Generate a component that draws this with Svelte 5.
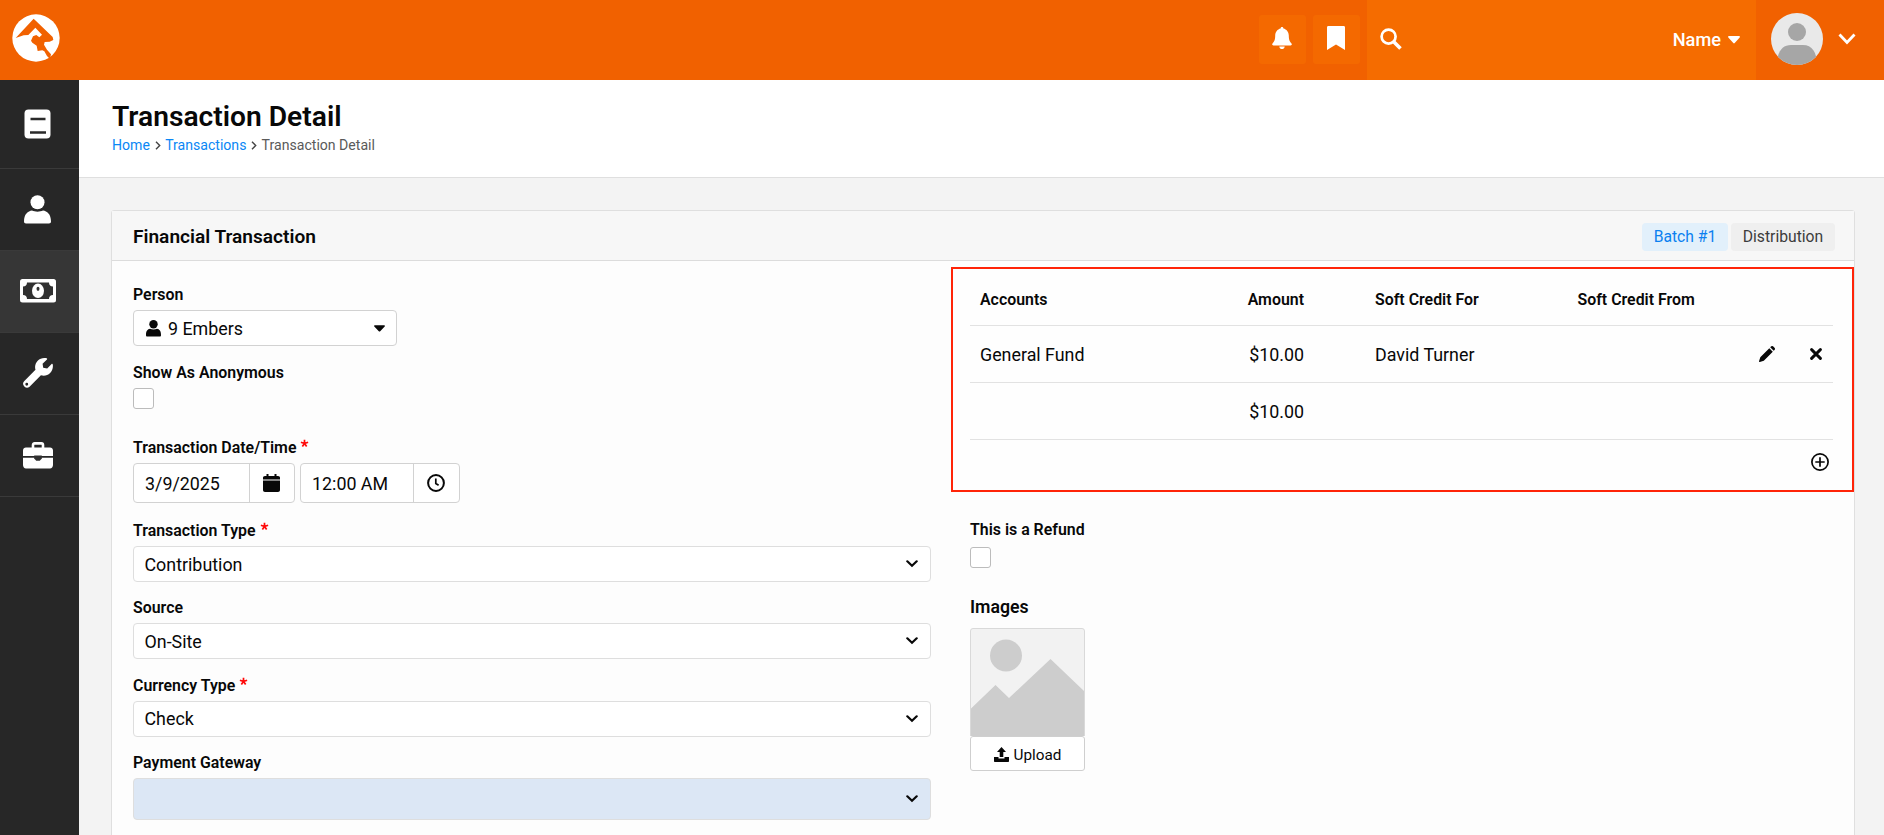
<script>
  const navItems = ["page", "person", "money", "wrench", "briefcase"];
  const activeItem = "money";

  const selects = [
    { label: "Transaction Type", value: "Contribution", required: true },
    { label: "Source", value: "On-Site" },
    { label: "Currency Type", value: "Check", required: true },
    { label: "Payment Gateway", value: "", highlighted: true },
  ];

  const accounts = [
    { name: "General Fund", amount: "$10.00", creditFor: "David Turner", creditFrom: "" },
  ];
  const total = "$10.00";
</script>

{#snippet required()}
  <svg class="required" viewBox="0 0 10 10"><path d="M5 .8V5M5 5 1 3.6M5 5l4-1.4M5 5 2.6 8.4M5 5l2.4 3.4" /></svg>
{/snippet}

{#snippet label(text, isRequired)}
  <div class="label">
    <span>{text}</span>
    {#if isRequired}{@render required()}{/if}
  </div>
{/snippet}

{#snippet navIcon(name)}
  {#if name === "page"}
    <svg width="27" height="30" viewBox="0 0 27 30">
      <rect x=".5" y=".5" width="26" height="29" rx="4" fill="#fff" />
      <path d="M6.500 10h15M6 23.500h16" stroke="#2a2a2a" stroke-width="2.500" />
    </svg>
  {:else if name === "person"}
    <svg width="27" height="29" viewBox="0 0 27 29" fill="#fff">
      <circle cx="13.500" cy="7.300" r="7" />
      <path d="M0 26.500C0 19 4 16 8 15.500c3 1.500 8 1.500 11 0 4 .5 8 3.500 8 11 0 1.300-.7 1.900-2 1.900H2c-1.300 0-2-.6-2-1.900z" />
    </svg>
  {:else if name === "money"}
    <svg width="36" height="24" viewBox="0 0 36 24">
      <rect width="36" height="23.500" rx="2.500" fill="#fff" />
      <path d="M7 3.500h22c0 2.500 1.500 4 4 4v8.500c-2.500 0-4 1.500-4 4H7c0-2.500-1.500-4-4-4V7.500c2.500 0 4-1.500 4-4z" fill="#303030" />
      <ellipse cx="18" cy="11.800" rx="6" ry="7.200" fill="#fff" />
      <ellipse cx="18" cy="9.800" rx="1.500" ry="2.100" fill="#303030" />
    </svg>
  {:else if name === "wrench"}
    <svg width="30" height="30" viewBox="0 0 512 512" fill="#fff">
      <path fill-rule="evenodd" d="M508 109c-2-9-14-12-20-5l-75 74-68-11-11-68 75-74c6-6 4-18-5-20-56-14-114 2-153 41-42 42-54 102-38 156L19 396a66 66 0 0 0 93 93l194-194c54 16 115 4 157-38 39-39 54-96 45-148zM64 472a24 24 0 1 1 0-48 24 24 0 0 1 0 48z" />
    </svg>
  {:else}
    <svg width="30" height="27" viewBox="0 0 30 27">
      <path d="M10 6V3c0-1 .8-1.600 1.600-1.600h6.800C19.200 1.400 20 2 20 3v3" fill="none" stroke="#fff" stroke-width="2.600" />
      <path d="M3 5.500h24c1.700 0 3 1.300 3 3V14H0V8.500c0-1.700 1.300-3 3-3zM0 15.800h30V23c0 1.700-1.300 3.500-3 3.500H3c-1.700 0-3-1.800-3-3.500z" fill="#fff" />
      <path d="M11.200 13.500h7.600v3l-2 2.300h-3.600l-2-2.300z" fill="#303030" />
    </svg>
  {/if}
{/snippet}

<header class="topbar">
  <svg class="logo" width="48" height="48" viewBox="0 0 144 144">
    <circle cx="72" cy="72" r="71" fill="#fff" />
    <path
      d="M11 72 65 14l57 55 2 9-11 5-15 1-2 8 9 15 12 14-3 14-9-9-8-14-6-3-14 2-3-16-13-9-4-6 6-13 10-4 9 7 8-8-20-21-21 22-14 1z"
      fill="#f16100"
    />
  </svg>

  <div class="quick">
    <button class="quick-btn" aria-label="Notifications">
      <svg width="20" height="22" viewBox="0 0 20 22" fill="#fff">
        <path d="M10 0c-.9 0-1.400.6-1.400 1.500C5.500 2.200 3.200 5 3.200 8.500c0 4.500-1 6-2.700 8-.7.800-.2 2 .9 2h17.200c1.100 0 1.600-1.200.9-2-1.700-2-2.700-3.500-2.700-8 0-3.500-2.300-6.300-5.400-7C11.400.6 10.900 0 10 0zM7.300 19.400h5.400c0 1.500-1.200 2.600-2.700 2.600s-2.700-1.100-2.700-2.600z" />
      </svg>
    </button>
    <button class="quick-btn" aria-label="Bookmarks">
      <svg width="18" height="24" viewBox="0 0 18 24" fill="#fff">
        <path d="M1.500 0h15c1 0 1.500.5 1.500 1.500V24l-9-5.500L0 24V1.500C0 .5.500 0 1.500 0z" />
      </svg>
    </button>
  </div>

  <div class="search">
    <svg width="22" height="22" viewBox="0 0 22 22" fill="none" stroke="#fff">
      <circle cx="8.600" cy="8.600" r="7" stroke-width="2.700" />
      <path d="m13.700 13.700 6.800 6.800" stroke-width="3.600" />
    </svg>
    <div class="search-type">
      <span>Name</span>
      <svg width="12" height="8" viewBox="0 0 12 8"><path d="M1 0h10c.9 0 1.200.9.700 1.500L6.700 7c-.4.500-1 .5-1.400 0L.3 1.500C-.2.9.1 0 1 0z" fill="#fff" /></svg>
    </div>
  </div>

  <div class="account">
    <svg width="52" height="52" viewBox="0 0 52 52">
      <clipPath id="avatar"><circle cx="26" cy="26" r="26" /></clipPath>
      <g clip-path="url(#avatar)">
        <rect width="52" height="52" fill="#e9e9e9" />
        <circle cx="26" cy="19" r="9" fill="#a6a6a6" />
        <path d="M6 52c0-13 5-20 14-20h12c9 0 14 7 14 20z" fill="#a6a6a6" />
      </g>
    </svg>
    <svg width="18" height="12" viewBox="0 0 18 12"><path d="m1.500 1.500 7.500 8 7.500-8" fill="none" stroke="#fff" stroke-width="2.800" /></svg>
  </div>
</header>

<div class="shell">
  <nav class="sidebar">
    {#each navItems as item}
      <div class="nav-item" class:active={item === activeItem}>
        {@render navIcon(item)}
      </div>
    {/each}
  </nav>

  <main>
    <div class="page-title">
      <h1>Transaction Detail</h1>
      <div class="breadcrumb">
        <span class="link">Home</span>
        <svg width="6" height="9" viewBox="0 0 6 9"><path d="m1 .8 3.700 3.700L1 8.200" /></svg>
        <span class="link">Transactions</span>
        <svg width="6" height="9" viewBox="0 0 6 9"><path d="m1 .8 3.700 3.700L1 8.200" /></svg>
        <span>Transaction Detail</span>
      </div>
    </div>

    <section class="panel">
      <div class="panel-heading">
        <h2>Financial Transaction</h2>
        <div class="tags">
          <span class="tag info">Batch #1</span>
          <span class="tag">Distribution</span>
        </div>
      </div>

      <div class="panel-body">
        <div class="left">
          <div class="field person-field">
            {@render label("Person")}
            <div class="control picker">
              <svg width="15" height="17" viewBox="0 0 15 17" fill="#080808">
                <circle cx="7.500" cy="4.200" r="4.200" />
                <path d="M0 15c0-4 1.500-5.700 4-6.200 2 1 5 1 7 0 2.500.5 4 2.200 4 6.200 0 1-.4 1.500-1.300 1.500H1.300C.4 16.500 0 16 0 15z" />
              </svg>
              <span class="person">9 Embers</span>
              <svg width="11" height="7" viewBox="0 0 11 7"><path d="M.8.300h9.400c.7 0 1 .7.500 1.200L6.200 6.200c-.4.400-1 .4-1.400 0L.3 1.500C-.2 1 .1.300.8.300z" fill="#080808" /></svg>
            </div>
          </div>

          <div class="field anonymous">
            {@render label("Show As Anonymous")}
            <div class="checkbox"></div>
          </div>

          <div class="field date-time">
            {@render label("Transaction Date/Time", true)}
            <div class="inputs">
              <div class="control addon date">
                <span>3/9/2025</span>
                <i>
                  <svg width="17" height="18" viewBox="0 0 17 18" fill="#080808">
                    <path d="M3.500 0h2v2h6V0h2v2H15c1.200 0 2 .7 2 1.800v1.700H0V3.800C0 2.700.8 2 2 2h1.500zM0 6.500h17V16c0 1.200-.8 2-2 2H2c-1.200 0-2-.8-2-2z" />
                  </svg>
                </i>
              </div>
              <div class="control addon time">
                <span>12:00 AM</span>
                <i>
                  <svg width="18" height="18" viewBox="0 0 18 18" fill="none" stroke="#080808">
                    <circle cx="9" cy="9" r="7.900" stroke-width="2" />
                    <path d="M8.800 4.500v5l2.800 1.700" stroke-width="1.700" />
                  </svg>
                </i>
              </div>
            </div>
          </div>

          {#each selects as item}
            <div class="field">
              {@render label(item.label, item.required)}
              <div class="control select" class:highlighted={item.highlighted}>
                <span>{item.value}</span>
                <svg width="12" height="8" viewBox="0 0 12 8"><path d="m1.300 1.300 4.700 4.500 4.700-4.500" fill="none" stroke="#080808" stroke-width="2.200" stroke-linecap="round" /></svg>
              </div>
            </div>
          {/each}
        </div>

        <div class="right">
          <div class="accounts">
            <div class="row head">
              <span>Accounts</span>
              <span class="amount">Amount</span>
              <span>Soft Credit For</span>
              <span>Soft Credit From</span>
            </div>
            {#each accounts as account}
              <div class="row">
                <span>{account.name}</span>
                <span class="amount">{account.amount}</span>
                <span>{account.creditFor}</span>
                <span>{account.creditFrom}</span>
                <div class="actions">
                  <svg width="16" height="16" viewBox="0 0 16 16" fill="#080808">
                    <path d="m10.300 2.200 3.500 3.500-9 9L.8 16c-.5.100-.9-.3-.8-.8l1.300-4zM11.200 1.300 12 .5c.7-.7 1.600-.7 2.300 0l1.200 1.200c.7.700.7 1.600 0 2.300l-.8.800z" />
                  </svg>
                  <svg width="12" height="12" viewBox="0 0 12 12"><path d="m1.600 1.600 8.800 8.800M10.400 1.600l-8.800 8.800" stroke="#080808" stroke-width="2.900" stroke-linecap="round" /></svg>
                </div>
              </div>
            {/each}
            <div class="row">
              <span></span>
              <span class="amount">{total}</span>
            </div>
            <div class="add">
              <svg width="18" height="18" viewBox="0 0 18 18" fill="none" stroke="#080808" stroke-width="1.700">
                <circle cx="9" cy="9" r="8.100" />
                <path d="M9 4.300v9.400M4.300 9h9.400" />
              </svg>
            </div>
          </div>

          <div class="refund">
            {@render label("This is a Refund")}
            <div class="checkbox"></div>
          </div>

          <div class="images">
            <h3>Images</h3>
            <svg width="115" height="108" viewBox="0 0 115 108">
              <path d="M.5 108V3Q.5.500 3 .5h109q2.500 0 2.500 2.500v105" fill="#f2f2f2" stroke="#d9d9d9" />
              <circle cx="36" cy="27.500" r="16" fill="#cdcdcd" />
              <path d="M1 80.500 25.500 57 39 70l41.500-39L114 63v45H1z" fill="#cdcdcd" />
            </svg>
            <button class="upload">
              <svg width="15" height="15" viewBox="0 0 15 15" fill="#080808">
                <path d="M7.500 0 12 5H9.300v5H5.700V5H3zM0 10h4.500v1.500h6V10H15v4c0 .6-.4 1-1 1H1c-.6 0-1-.4-1-1z" />
              </svg>
              <span>Upload</span>
            </button>
          </div>
        </div>
      </div>
    </section>
  </main>
</div>

<style>
  :global(body) {
    margin: 0;
    overflow: hidden;
    font-family: Roboto, "Liberation Sans", sans-serif;
    color: #080808;
  }

  * {
    box-sizing: border-box;
  }

  svg {
    display: block;
    flex: none;
  }

  span {
    white-space: nowrap;
  }

  h1,
  h2,
  h3 {
    margin: 0;
    font-weight: 600;
  }

  .topbar {
    display: flex;
    height: 80px;
    background: #f16100;
  }

  .logo {
    margin: 14px 0 0 12px;
  }

  .quick {
    display: flex;
    gap: 7px;
    margin-left: auto;
    padding: 15px 7px 0 0;
  }

  .quick-btn {
    display: flex;
    align-items: center;
    justify-content: center;
    width: 47px;
    height: 49px;
    padding: 0 1px 3px 0;
    border: 0;
    border-radius: 3px;
    background: #f46900;
  }

  .search {
    display: flex;
    align-items: center;
    justify-content: space-between;
    width: 389px;
    padding: 0 16px 3px 13px;
    background: #f56c00;
  }

  .search-type {
    display: flex;
    align-items: center;
    gap: 7px;
    padding-top: 2px;
    font-size: 18.200px;
    font-weight: 500;
    color: #fff;
  }

  .account {
    display: flex;
    align-items: center;
    gap: 15px;
    width: 128px;
    padding: 0 0 3px 15px;
  }

  .shell {
    display: flex;
    height: 755px;
  }

  .sidebar {
    width: 79px;
    flex: none;
    background: #272727;
  }

  .nav-item {
    display: flex;
    align-items: center;
    justify-content: center;
    height: 82px;
    padding: 0 4px 1px 0;
    border-bottom: 1px solid #3a3a3a;
  }

  .nav-item:first-child {
    height: 89px;
    padding-bottom: 0;
  }

  .nav-item.active {
    background: #363636;
  }

  main {
    flex: 1;
    background: #f3f3f3;
  }

  .page-title {
    height: 98px;
    padding: 20px 33px;
    border-bottom: 1px solid #dfdfdf;
    background: #fff;
  }

  h1 {
    font-size: 28.200px;
    line-height: 33px;
  }

  .breadcrumb {
    display: flex;
    align-items: center;
    height: 24px;
    font-size: 14.100px;
    color: #5a5a5a;
  }

  .breadcrumb svg {
    margin: 0 4.600px;
    fill: none;
    stroke: #444;
    stroke-width: 1.400;
  }

  .link {
    color: #0b87f5;
  }

  .panel {
    height: 640px;
    margin: 32px 31px 0 32px;
    border: 1px solid #dfdfdf;
    border-radius: 3px 3px 0 0;
    background: #fdfdfd;
  }

  .panel-heading {
    display: flex;
    align-items: center;
    justify-content: space-between;
    height: 50px;
    padding: 1px 19px 0 21px;
    border-bottom: 1px solid #dcdcdc;
    background: #f7f7f7;
  }

  h2 {
    font-size: 19.100px;
  }

  .tags {
    display: flex;
    gap: 3px;
    padding-top: 1px;
  }

  .tag {
    width: 104px;
    height: 28px;
    border-radius: 4px;
    background: #efefef;
    font-size: 15.700px;
    line-height: 28px;
    text-align: center;
    color: #3c3c3c;
  }

  .tag.info {
    width: 86px;
    background: #e2f0fb;
    color: #0b80f0;
  }

  .panel-body {
    display: flex;
  }

  .left {
    width: 839px;
    flex: none;
    padding: 24px 0 0 21px;
  }

  .field {
    margin-bottom: 16.300px;
  }

  .person-field {
    margin-bottom: 17px;
  }

  .label {
    display: flex;
    height: 25px;
    font-size: 15.900px;
    font-weight: 600;
    line-height: 19px;
  }

  .required {
    width: 9px;
    height: 9px;
    margin: 1px 0 0 4px;
    fill: none;
    stroke: #ff0a0a;
    stroke-width: 1.900;
  }

  .control {
    display: flex;
    align-items: center;
    height: 36px;
    border: 1px solid #d2d2d2;
    border-radius: 4px;
    background: #fff;
    font-size: 17.850px;
  }

  .picker {
    width: 264px;
    padding: 0 11px 0 12px;
  }

  .picker .person {
    flex: 1;
    margin-left: 7px;
  }

  .checkbox {
    width: 21px;
    height: 21px;
    border: 1px solid #bcbcbc;
    border-radius: 3px;
    background: #fff;
  }

  .anonymous {
    margin-bottom: 29px;
  }

  .inputs {
    display: flex;
    gap: 5px;
  }

  .date-time {
    margin-bottom: 18px;
  }

  .addon {
    justify-content: space-between;
    height: 40px;
    padding-left: 11px;
  }

  .addon i {
    display: flex;
    align-items: center;
    justify-content: center;
    width: 46px;
    height: 38px;
    padding-right: 1px;
    border-left: 1px solid #d2d2d2;
  }

  .date {
    width: 162px;
  }

  .date i {
    width: 45px;
  }

  .time {
    width: 160px;
  }

  .select {
    justify-content: space-between;
    width: 798px;
    padding: 0 12px 0 10.500px;
    border-color: #dedede;
  }

  .highlighted {
    height: 42px;
    background: #dce7f5;
  }

  .right {
    width: 903px;
    flex: none;
    padding-top: 6px;
  }

  .accounts {
    width: 903px;
    height: 225px;
    padding: 0 19px 0 17px;
    border: 2px solid #ff2408;
    background: #fefefe;
  }

  .row {
    display: grid;
    grid-template-columns: 324px 71px 202.500px 160px 1fr;
    align-items: center;
    height: 57px;
    padding-left: 10px;
    border-bottom: 1px solid #e2e2e2;
    font-size: 17.850px;
  }

  .head {
    font-size: 15.900px;
    font-weight: 600;
    padding-top: 5px;
  }

  .amount {
    justify-self: start;
    width: 0;
    display: flex;
    justify-content: flex-end;
  }

  .actions {
    display: flex;
    align-items: center;
    justify-content: flex-end;
    gap: 35px;
    padding-right: 11px;
  }

  .add {
    display: flex;
    align-items: center;
    justify-content: flex-end;
    height: 44px;
    padding-right: 4px;
  }

  .refund {
    padding: 28px 0 0 19px;
  }

  .refund .label {
    height: 27px;
    line-height: 20px;
  }

  .images {
    width: 134px;
    padding: 28px 0 0 19px;
  }

  h3 {
    height: 32px;
    font-size: 17.700px;
    line-height: 22px;
  }

  .upload {
    display: flex;
    align-items: center;
    justify-content: center;
    gap: 5px;
    width: 115px;
    height: 35px;
    padding: 2px 0 0;
    border: 1px solid #cfcfcf;
    border-radius: 3px;
    background: #fff;
    font-family: inherit;
    font-size: 15.300px;
    color: #080808;
  }
</style>
